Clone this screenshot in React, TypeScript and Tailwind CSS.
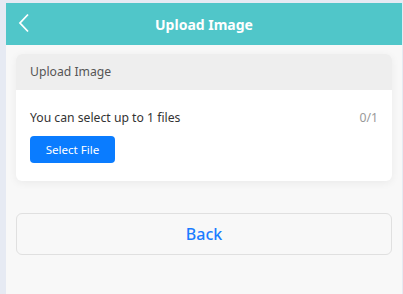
export default function App() {
  return (
    <div className="h-[294px] w-[403px] overflow-hidden bg-[#e6eaf3] pl-[6px] pr-[1px] pt-[3px] font-['Noto_Sans',sans-serif]">
      <div className="flex h-full flex-col bg-[#f8f8f8]">
        <header className="relative flex h-[42px] shrink-0 items-center justify-center bg-[#50c6c9]">
          <svg
            className="absolute left-[12px] top-[10px]"
            width="12"
            height="20"
            viewBox="0 0 12 20"
            fill="none"
          >
            <path d="M10 1.5 2 10l8 8.5" stroke="#fff" strokeWidth="1.8" />
          </svg>
          <h1 className="text-[14px] font-bold text-white">Upload Image</h1>
        </header>

        <div className="flex flex-col px-[10px] pt-[9px]">
          <div className="overflow-hidden rounded-[6px] bg-white shadow-[0_2px_8px_rgba(0,0,0,0.06)]">
            <div className="flex h-[36px] items-center bg-[#eeeeee] px-[14px] pt-[1px] text-[12.2px] text-[#555]">
              Upload Image
            </div>
            <div className="px-[14px] pb-[18px] pt-[19px]">
              <div className="flex h-[19px] items-center justify-between text-[12.2px]">
                <span className="text-[#333]">You can select up to 1 files</span>
                <span className="text-[#999]">0/1</span>
              </div>
              <button className="mt-[8px] h-[27px] w-[85px] rounded-[4px] bg-[#0a7cff] text-[11.6px] text-white">
                Select File
              </button>
            </div>
          </div>

          <button className="mt-[32px] h-[42px] rounded-[6px] border border-[#e0e0e0] bg-[#f8f8f8] text-[16px] font-medium text-[#1a7cff]">
            Back
          </button>
        </div>
      </div>
    </div>
  );
}
